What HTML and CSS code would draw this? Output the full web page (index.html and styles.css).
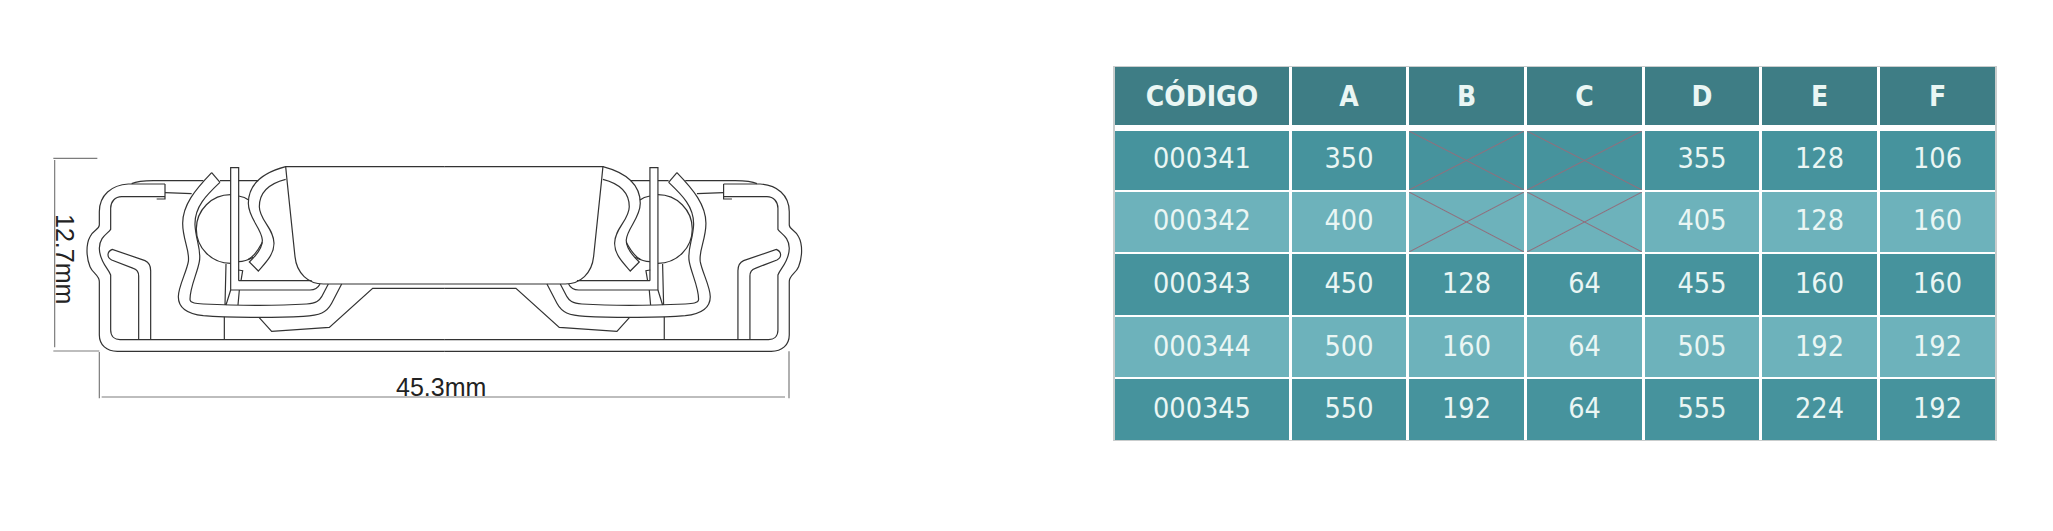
FILE: index.html
```html
<!DOCTYPE html>
<html lang="es">
<head>
<meta charset="UTF-8">
<meta name="viewport" content="width=device-width, initial-scale=1.0">
<title>Mecanismo de palanca</title>
<link rel="stylesheet" href="styles.css">
</head>
<body>

<div class="sheet">
  <!-- 3 user units = 1 page pixel -->
  <svg class="drawing" viewBox="-120 -420 3339 1593">
    <defs>
      <g id="half">
        <!-- outer shell -->
        <path d="M375 132 L265 132 C215 135 178 165 178 215 L178 255 C178 268 160 270 150 290 C138 312 138 350 150 380 C158 400 178 405 178 425 L178 585 C178 615 200 634 232 634 L1213 634"/>
        <path d="M375 170 L245 170 C225 170 212 185 212 205 L212 268 C205 280 178 290 178 325 C178 365 205 385 212 405 L212 570 C212 590 225 599 240 599 L1213 599"/>
        <path d="M350 177 L375 177 L375 132"/>
        <path d="M275 131 C290 124 310 122 340 122 L490 122 M540 122 L572 122 M596 122 L655 122"/>
        <path d="M375 158 L455 161"/>

        <!-- inner leg -->
        <path d="M296 599 L296 408 C296 396 290 388 280 385 L215 360 C200 352 200 335 217 328 L315 362 C328 368 332 378 332 392 L332 599"/>

        <!-- roller -->
        <path d="M572 164 A103 103 0 1 0 572 370 M596 168 C610 170 620 175 626 180 M596 365 C610 365 625 360 640 352"/>

        <!-- large spring -->
        <path d="M515 98 C465 150 428 195 428 250 C428 300 450 330 445 365 C440 395 415 440 415 470 C415 505 445 522 490 527 C560 533 700 534 790 529 C840 526 860 518 875 490 L905 432"/>
        <path d="M540 127 C500 165 463 200 465 255 C467 300 485 330 478 365 C472 400 450 440 450 478 C450 490 470 491 490 492 C600 497 720 497 800 492 C830 490 838 482 845 470 L865 432"/>
        <path d="M515 98 L540 127"/>

        <!-- upright -->
        <path d="M596 422 L596 83 L572 83 L572 450 L810 450 C825 450 835 442 840 432 M596 422 L815 422"/>
        <path d="M558 372 L555 495 M572 450 L558 495 M598 450 L594 495 M553 530 L553 599 M595 390 L608 392 L603 422"/>

        <!-- S clip -->
        <path d="M737 80 C680 95 625 125 625 190 C625 235 665 265 667 300 C668 325 645 350 628 366 L655 393 C675 370 702 345 702 310 C702 265 658 240 658 200 C658 155 690 130 737 118"/>
        <path d="M667 307 C655 330 640 350 625 358"/>

        <!-- centre block -->
        <path d="M1213 80 L737 80 L742 130 L765 350 C770 400 805 432 850 432 L1213 432"/>
        <path d="M1213 445 L998 445 L868 562 L695 574 L657 532"/>
      </g>
    </defs>

    <g class="lines">
      <use href="#half"/>
      <use href="#half" transform="matrix(-1 0 0 1 2425.8 0)"/>
    </g>

    <path class="dim" d="M40 55 L172 55 M44 60 L44 622 M40 633 L178 633 M178 636 L178 775 M185 771 L2235 771 M2247 634 L2247 775"/>
    <text class="dim-text" x="1068" y="768">45.3mm</text>
    <text class="dim-text" transform="translate(48 222) rotate(90)">12.7mm</text>
  </svg>

  <div class="spec">
    <table>
      <thead>
        <tr><th>CÓDIGO</th><th>A</th><th>B</th><th>C</th><th>D</th><th>E</th><th>F</th></tr>
      </thead>
      <tbody>
        <tr class="dark r1"><td>000341</td><td>350</td><td class="none"></td><td class="none"></td><td>355</td><td>128</td><td>106</td></tr>
        <tr class="light"><td>000342</td><td>400</td><td class="none"></td><td class="none"></td><td>405</td><td>128</td><td>160</td></tr>
        <tr class="dark tall"><td>000343</td><td>450</td><td>128</td><td>64</td><td>455</td><td>160</td><td>160</td></tr>
        <tr class="light low"><td>000344</td><td>500</td><td>160</td><td>64</td><td>505</td><td>192</td><td>192</td></tr>
        <tr class="dark tall"><td>000345</td><td>550</td><td>192</td><td>64</td><td>555</td><td>224</td><td>192</td></tr>
      </tbody>
    </table>
  </div>
</div>

</body>
</html>
```

FILE: styles.css
```css
body {
  margin: 0;
  background: white;
}

.sheet {
  display: flex;
  align-items: flex-start;
  height: 531px;
  overflow: hidden;
}

.drawing {
  flex: none;
  width: 1113px;
  height: 531px;
}

.lines {
  fill: none;
  stroke: #333;
  stroke-width: 3.6;
}

.dim {
  fill: none;
  stroke: #7c7c7c;
  stroke-width: 3.6;
}

.dim-text {
  font-family: "Liberation Sans", Arial, sans-serif;
  font-size: 75px;
  fill: #222;
}

.spec {
  flex: none;
  width: 880px;
  margin-top: 66px;
  border: solid #c9cdcd;
  border-width: 1px 2px;
  overflow: hidden;
}

table {
  width: 886px;
  margin: -2px -3px;
  border-spacing: 3px 2px;
  table-layout: fixed;
  font-family: "DejaVu Sans Condensed", "DejaVu Sans", sans-serif;
  font-stretch: condensed;
  color: #eaf6f4;
  text-align: center;
}

th, td {
  box-sizing: border-box;
  padding: 0;
}

th {
  width: 115px;
  height: 62px;
  border-bottom: 4px solid white;
  background: #3e7d85;
  background-clip: padding-box;
  font-size: 28px;
  font-weight: bold;
}

th:first-child { width: 174px; }
th:nth-child(2), th:nth-child(5) { width: 114px; }

td {
  height: 60px;
  font-size: 28.5px;
  padding-bottom: 4px;
}

.r1 td { height: 59px; }
.tall td { height: 61px; padding-bottom: 2px; }
.low td { padding-bottom: 2px; }

.dark td { background-color: #46939d; }
.light td { background-color: #6db2bb; }

td.none {
  background-image:
    linear-gradient(to top right, transparent calc(50% - 1px), #8f6f7d, transparent calc(50% + 1px)),
    linear-gradient(to bottom right, transparent calc(50% - 1px), #8f6f7d, transparent calc(50% + 1px));
}
```
